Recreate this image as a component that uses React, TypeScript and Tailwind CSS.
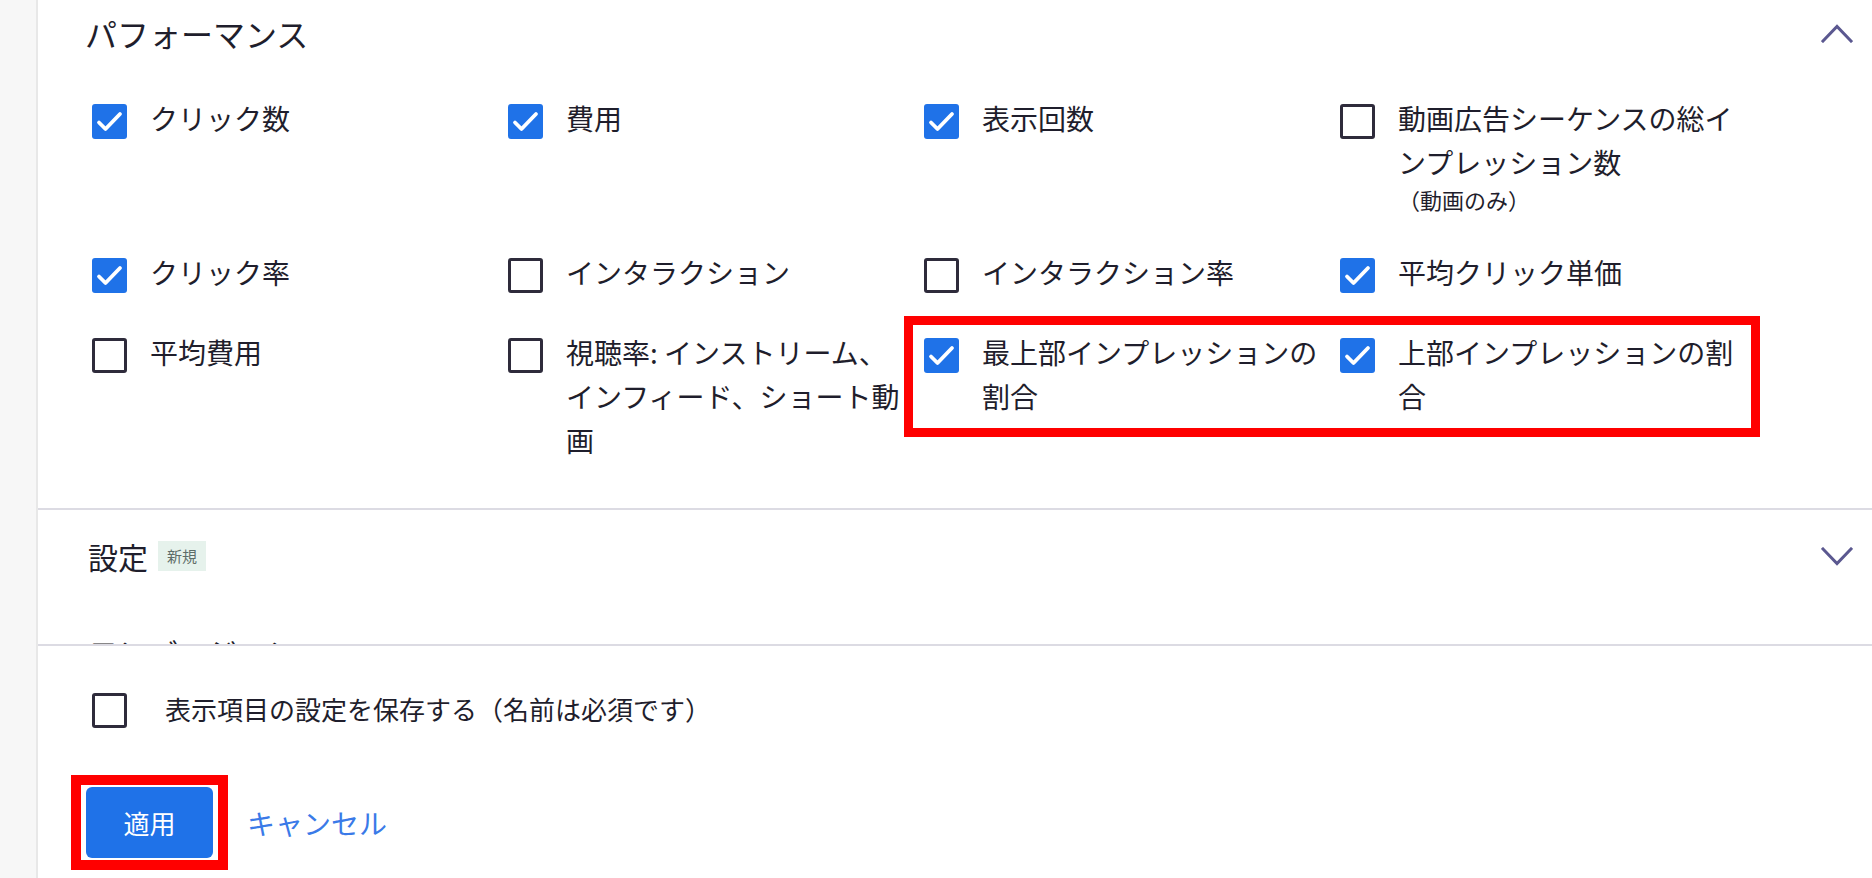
import React from 'react'

const FONT = '"Noto Sans CJK JP", "Noto Sans", sans-serif'

interface Metric {
  label: string
  sub?: string
  checked: boolean
}

const rows: Metric[] = [
  { label: 'クリック数', checked: true },
  { label: '費用', checked: true },
  { label: '表示回数', checked: true },
  { label: '動画広告シーケンスの総インプレッション数', sub: '（動画のみ）', checked: false },
  { label: 'クリック率', checked: true },
  { label: 'インタラクション', checked: false },
  { label: 'インタラクション率', checked: false },
  { label: '平均クリック単価', checked: true },
  { label: '平均費用', checked: false },
  { label: '視聴率: インストリーム、インフィード、ショート動画', checked: false },
  { label: '最上部インプレッションの割合', checked: true },
  { label: '上部インプレッションの割合', checked: true },
]

function Checkbox({ checked }: { checked: boolean }) {
  if (checked) {
    return (
      <div className="w-[35px] h-[35px] shrink-0 rounded-[3px] bg-[#1f72e8] flex items-center justify-center">
        <svg width="35" height="35" viewBox="0 0 35 35" fill="none">
          <path d="M7 18.5 L13.5 25 L28 10" stroke="white" strokeWidth="3.8" strokeLinecap="round" strokeLinejoin="round" />
        </svg>
      </div>
    )
  }
  return <div className="w-[35px] h-[35px] shrink-0 rounded-[3px] border-[3px] border-[#2e2b3b] bg-white" />
}

function Chevron({ up }: { up?: boolean }) {
  return (
    <svg width="32" height="19" viewBox="0 0 32 19" fill="none">
      <path
        d={up ? 'M2 17 L16 2.5 L30 17' : 'M2 2 L16 16.5 L30 2'}
        stroke="#5b5890"
        strokeWidth="3"
        strokeLinecap="square"
      />
    </svg>
  )
}

export default function App() {
  return (
    <div className="w-[1872px] h-[878px] flex bg-white overflow-hidden text-[#1f1e2c]" style={{ fontFamily: FONT }}>
      {/* Left rail */}
      <div className="w-[38px] shrink-0 bg-[#f7f7f7] border-r-2 border-[#e8e8e8]" />

      <div className="flex-1 flex flex-col min-w-0">
        {/* Scrollable sections */}
        <div className="h-[644px] overflow-hidden shrink-0">
          {/* Performance */}
          <div className="border-b-2 border-[#dcdbe3] pb-[46px]">
            <div className="h-[66px] flex items-center justify-between pl-[47px] pr-[19px]">
              <span className="text-[32px] leading-none">パフォーマンス</span>
              <Chevron up />
            </div>

            <div className="relative ml-[54px] mt-[30px] grid grid-cols-[repeat(4,416px)] gap-y-[36px]">
              {rows.map((m) => (
                <div key={m.label} className="flex items-start gap-[23px]">
                  <div className="mt-[8px]">
                    <Checkbox checked={m.checked} />
                  </div>
                  <div className="w-[344px]">
                    <p className="text-[28px] leading-[44px]">{m.label}</p>
                    {m.sub && <p className="text-[22px] leading-[30px]">{m.sub}</p>}
                  </div>
                </div>
              ))}

              {/* annotation box */}
              <div className="absolute left-[812px] top-[220px] w-[856px] h-[121px] border-[9px] border-[#ff0000] pointer-events-none" />
            </div>
          </div>

          {/* Settings */}
          <div className="h-[92px] flex items-center justify-between pl-[50px] pr-[19px]">
            <div className="flex items-center gap-[10px]">
              <span className="text-[30px] leading-none">設定</span>
              <span className="h-[30px] w-[48px] bg-[#e6f2ec] text-[#5e6d69] text-[15px] flex items-center justify-center">
                新規
              </span>
            </div>
            <Chevron />
          </div>

          <div className="h-[92px] flex items-center pl-[50px] mt-[3px]">
            <span className="text-[30px] leading-none">コンバージョン</span>
          </div>
        </div>

        {/* Footer */}
        <div className="flex-1 border-t-2 border-[#dcdbe3] pl-[54px]">
          <div className="mt-[47px] flex items-center gap-[38px]">
            <Checkbox checked={false} />
            <span className="text-[26px] leading-none -mt-[3px]">表示項目の設定を保存する（名前は必須です）</span>
          </div>

          <div className="mt-[47px] -ml-[21px] flex items-center gap-[19px]">
            <div className="border-[10px] border-[#ff0000] px-[5px] py-[2px]">
              <button className="w-[127px] h-[71px] rounded-[6px] bg-[#1f72e8] text-white text-[26px]">
                適用
              </button>
            </div>
            <button className="text-[28px] text-[#3a7ae8] leading-none">キャンセル</button>
          </div>
        </div>
      </div>
    </div>
  )
}
